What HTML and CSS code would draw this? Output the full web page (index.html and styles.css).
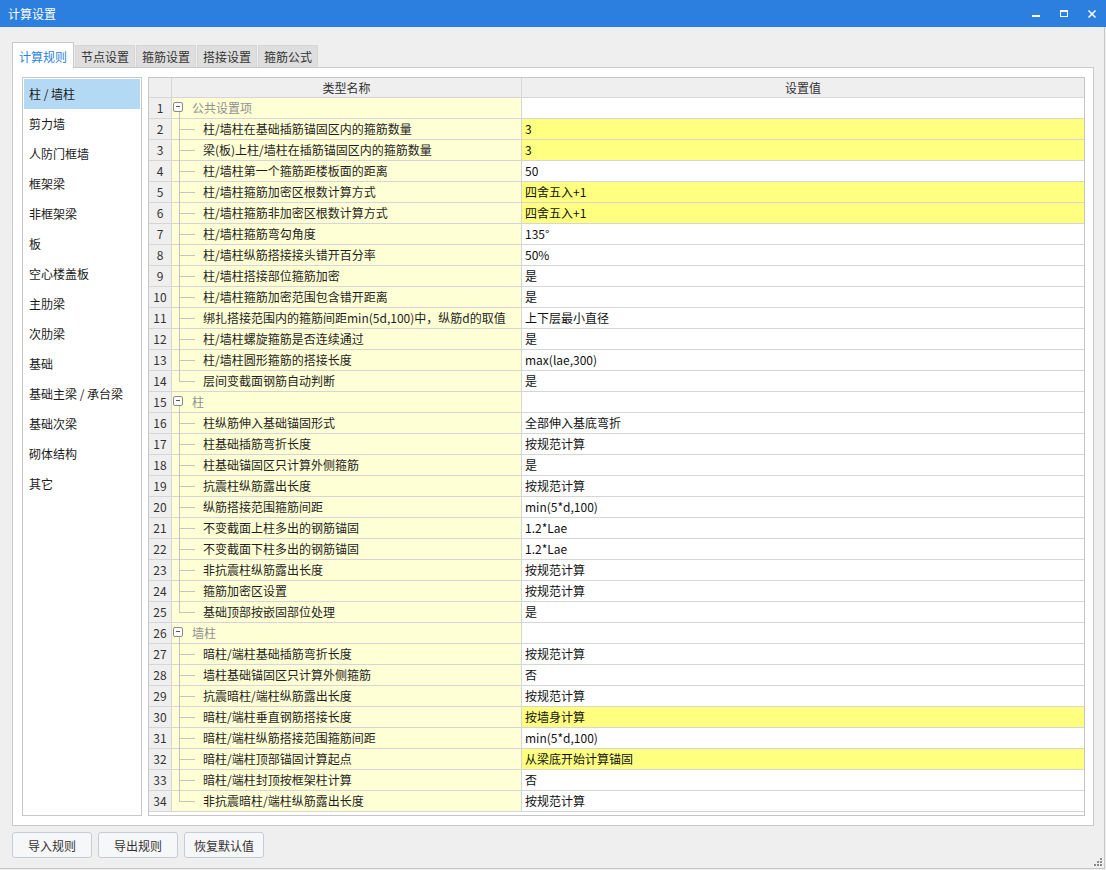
FILE: index.html
```html
<!DOCTYPE html>
<html lang="zh-CN">
<head>
<meta charset="utf-8">
<title>计算设置</title>
<link rel="stylesheet" href="styles.css">
</head>
<body>
<div class="window">
  <div class="titlebar">
    <span class="title">计算设置</span>
    <div class="controls">
      <span class="ctl"><svg width="28" height="27" viewBox="0 0 28 27"><rect x="10" y="15" width="8" height="2" fill="#fff"/></svg></span>
      <span class="ctl"><svg width="28" height="27" viewBox="0 0 28 27"><rect x="10" y="10" width="8" height="2" fill="#fff"/><rect x="10.5" y="10.5" width="7" height="6" fill="none" stroke="#fff" stroke-width="1"/></svg></span>
      <span class="ctl"><svg width="28" height="27" viewBox="0 0 28 27"><path d="M10.5 10.5 L17.5 17.5 M17.5 10.5 L10.5 17.5" stroke="#fff" stroke-width="1.5" fill="none"/></svg></span>
    </div>
  </div>
  <div class="client">
    <div class="tabs">
      <div class="tab active">计算规则</div>
      <div class="tab">节点设置</div>
      <div class="tab">箍筋设置</div>
      <div class="tab">搭接设置</div>
      <div class="tab">箍筋公式</div>
    </div>
    <div class="panel">
      <div class="list">
        <div class="item selected">柱 / 墙柱</div>
        <div class="item">剪力墙</div>
        <div class="item">人防门框墙</div>
        <div class="item">框架梁</div>
        <div class="item">非框架梁</div>
        <div class="item">板</div>
        <div class="item">空心楼盖板</div>
        <div class="item">主肋梁</div>
        <div class="item">次肋梁</div>
        <div class="item">基础</div>
        <div class="item">基础主梁 / 承台梁</div>
        <div class="item">基础次梁</div>
        <div class="item">砌体结构</div>
        <div class="item">其它</div>
      </div>
      <div class="grid">
        <div class="row head">
          <div class="num"></div>
          <div class="hname">类型名称</div>
          <div class="hval">设置值</div>
        </div>
        <div class="row"><div class="num">1</div><div class="name group"><span class="box"></span>公共设置项</div><div class="val"></div></div>
        <div class="row"><div class="num">2</div><div class="name child">柱/墙柱在基础插筋锚固区内的箍筋数量</div><div class="val hl">3</div></div>
        <div class="row"><div class="num">3</div><div class="name child">梁(板)上柱/墙柱在插筋锚固区内的箍筋数量</div><div class="val hl">3</div></div>
        <div class="row"><div class="num">4</div><div class="name child">柱/墙柱第一个箍筋距楼板面的距离</div><div class="val">50</div></div>
        <div class="row"><div class="num">5</div><div class="name child">柱/墙柱箍筋加密区根数计算方式</div><div class="val hl">四舍五入+1</div></div>
        <div class="row"><div class="num">6</div><div class="name child">柱/墙柱箍筋非加密区根数计算方式</div><div class="val hl">四舍五入+1</div></div>
        <div class="row"><div class="num">7</div><div class="name child">柱/墙柱箍筋弯勾角度</div><div class="val">135°</div></div>
        <div class="row"><div class="num">8</div><div class="name child">柱/墙柱纵筋搭接接头错开百分率</div><div class="val">50%</div></div>
        <div class="row"><div class="num">9</div><div class="name child">柱/墙柱搭接部位箍筋加密</div><div class="val">是</div></div>
        <div class="row"><div class="num">10</div><div class="name child">柱/墙柱箍筋加密范围包含错开距离</div><div class="val">是</div></div>
        <div class="row"><div class="num">11</div><div class="name child">绑扎搭接范围内的箍筋间距min(5d,100)中，纵筋d的取值</div><div class="val">上下层最小直径</div></div>
        <div class="row"><div class="num">12</div><div class="name child">柱/墙柱螺旋箍筋是否连续通过</div><div class="val">是</div></div>
        <div class="row"><div class="num">13</div><div class="name child">柱/墙柱圆形箍筋的搭接长度</div><div class="val">max(lae,300)</div></div>
        <div class="row"><div class="num">14</div><div class="name child last">层间变截面钢筋自动判断</div><div class="val">是</div></div>
        <div class="row"><div class="num">15</div><div class="name group"><span class="box"></span>柱</div><div class="val"></div></div>
        <div class="row"><div class="num">16</div><div class="name child">柱纵筋伸入基础锚固形式</div><div class="val">全部伸入基底弯折</div></div>
        <div class="row"><div class="num">17</div><div class="name child">柱基础插筋弯折长度</div><div class="val">按规范计算</div></div>
        <div class="row"><div class="num">18</div><div class="name child">柱基础锚固区只计算外侧箍筋</div><div class="val">是</div></div>
        <div class="row"><div class="num">19</div><div class="name child">抗震柱纵筋露出长度</div><div class="val">按规范计算</div></div>
        <div class="row"><div class="num">20</div><div class="name child">纵筋搭接范围箍筋间距</div><div class="val">min(5*d,100)</div></div>
        <div class="row"><div class="num">21</div><div class="name child">不变截面上柱多出的钢筋锚固</div><div class="val">1.2*Lae</div></div>
        <div class="row"><div class="num">22</div><div class="name child">不变截面下柱多出的钢筋锚固</div><div class="val">1.2*Lae</div></div>
        <div class="row"><div class="num">23</div><div class="name child">非抗震柱纵筋露出长度</div><div class="val">按规范计算</div></div>
        <div class="row"><div class="num">24</div><div class="name child">箍筋加密区设置</div><div class="val">按规范计算</div></div>
        <div class="row"><div class="num">25</div><div class="name child last">基础顶部按嵌固部位处理</div><div class="val">是</div></div>
        <div class="row"><div class="num">26</div><div class="name group"><span class="box"></span>墙柱</div><div class="val"></div></div>
        <div class="row"><div class="num">27</div><div class="name child">暗柱/端柱基础插筋弯折长度</div><div class="val">按规范计算</div></div>
        <div class="row"><div class="num">28</div><div class="name child">墙柱基础锚固区只计算外侧箍筋</div><div class="val">否</div></div>
        <div class="row"><div class="num">29</div><div class="name child">抗震暗柱/端柱纵筋露出长度</div><div class="val">按规范计算</div></div>
        <div class="row"><div class="num">30</div><div class="name child">暗柱/端柱垂直钢筋搭接长度</div><div class="val hl">按墙身计算</div></div>
        <div class="row"><div class="num">31</div><div class="name child">暗柱/端柱纵筋搭接范围箍筋间距</div><div class="val">min(5*d,100)</div></div>
        <div class="row"><div class="num">32</div><div class="name child">暗柱/端柱顶部锚固计算起点</div><div class="val hl">从梁底开始计算锚固</div></div>
        <div class="row"><div class="num">33</div><div class="name child">暗柱/端柱封顶按框架柱计算</div><div class="val">否</div></div>
        <div class="row"><div class="num">34</div><div class="name child last">非抗震暗柱/端柱纵筋露出长度</div><div class="val">按规范计算</div></div>
      </div>
    </div>
    <div class="buttons">
      <button class="btn">导入规则</button>
      <button class="btn">导出规则</button>
      <button class="btn">恢复默认值</button>
    </div>
    <svg class="grip" width="8" height="8" viewBox="0 0 8 8">
      <rect x="6" y="0" width="2" height="2" fill="#8a8a8a"/>
      <rect x="3" y="3" width="2" height="2" fill="#8a8a8a"/>
      <rect x="6" y="3" width="2" height="2" fill="#8a8a8a"/>
      <rect x="0" y="6" width="2" height="2" fill="#8a8a8a"/>
      <rect x="3" y="6" width="2" height="2" fill="#8a8a8a"/>
      <rect x="6" y="6" width="2" height="2" fill="#8a8a8a"/>
    </svg>
  </div>
</div>
</body>
</html>
```

FILE: styles.css
```css
* { box-sizing: border-box; }
html, body { margin: 0; padding: 0; }
body {
  width: 1106px;
  height: 870px;
  overflow: hidden;
  background: #efefef;
  font-family: "Noto Sans CJK SC", "Microsoft YaHei", sans-serif;
  font-size: 12px;
  color: #1e1e1e;
}
.window {
  width: 1106px;
  height: 870px;
  display: flex;
  flex-direction: column;
}
.titlebar {
  height: 27px;
  flex: none;
  background: #2c7fde;
  color: #fff;
  display: flex;
  align-items: center;
  padding-left: 8px;
}
.title { font-size: 12px; line-height: 27px; }
.controls { margin-left: auto; display: flex; height: 27px; }
.ctl { width: 28px; height: 27px; display: block; }
.ctl svg { display: block; }
.client {
  flex: 1;
  position: relative;
  border-right: 1px solid #c6c6c6;
  border-bottom: 1px solid #c6c6c6;
  margin-right: 1px;
  margin-bottom: 1px;
}
.tabs {
  display: flex;
  align-items: flex-end;
  gap: 1px;
  margin: 15px 0 0 12px;
  height: 25px;
}
.tab {
  width: 60px;
  height: 22px;
  line-height: 21px;
  text-align: center;
  background: #dedede;
  border: 1px solid #d6d6d6;
  border-bottom: none;
  color: #333;
}
.tab.active {
  width: 62px;
  height: 26px;
  line-height: 27px;
  background: #fff;
  border-color: #c8c8c8;
  color: #2b7fdf;
  margin-bottom: -1px;
  position: relative;
  z-index: 2;
}
.panel {
  margin-left: 12px;
  width: 1082px;
  height: 759px;
  border: 1px solid #c9c9c9;
  background: #fff;
  padding: 9px 8px 9px 9px;
  display: flex;
  gap: 6px;
}
.list {
  width: 120px;
  flex: none;
  border: 1px solid #c8c8c8;
  padding: 1px;
}
.item {
  height: 30px;
  line-height: 30px;
  padding-left: 5px;
  color: #1a1a1a;
}
.item.selected { background: #b4d9f5; }
.grid {
  flex: 1;
  border: 1px solid #c6c6c6;
  background: #fff;
}
.row {
  display: grid;
  grid-template-columns: 23px 350px 1fr;
  height: 21px;
}
.row.head { height: 20px; background: #efefef; }
.row > div { border-bottom: 1px solid #d6d6d6; }
.head > div {
  text-align: center;
  line-height: 19px;
  color: #333;
  border-right: 1px solid #d6d6d6;
}
.head > .hval { border-right: none; }
.num {
  background: #efefef;
  border-right: 1px solid #d6d6d6;
  text-align: center;
  line-height: 20px;
  color: #333;
}
.name {
  background: #ffffd5;
  border-right: 1px solid #d6d6d6;
  line-height: 20px;
  position: relative;
  white-space: nowrap;
}
.name.group { padding-left: 20px; color: #919191; }
.name.child { padding-left: 31px; }
.box {
  position: absolute;
  left: 1px;
  top: 4px;
  width: 10px;
  height: 10px;
  border: 1px solid #8a8a8a;
  border-radius: 2px;
  background: #fff;
}
.box::after {
  content: "";
  position: absolute;
  left: 2px;
  top: 3px;
  width: 4px;
  height: 1px;
  background: #555;
}
.name.group::after {
  content: "";
  position: absolute;
  left: 7px;
  top: 14px;
  bottom: -1px;
  width: 1px;
  background: #c4c4c4;
}
.name.child::before {
  content: "";
  position: absolute;
  left: 7px;
  top: 0;
  bottom: -1px;
  width: 1px;
  background: #c4c4c4;
}
.name.child.last::before { bottom: 10px; }
.name.child::after {
  content: "";
  position: absolute;
  left: 7px;
  top: 10px;
  width: 16px;
  height: 1px;
  background: #c4c4c4;
}
.val {
  padding-left: 3px;
  line-height: 20px;
  background: #fff;
  color: #111;
}
.val.hl { background: #ffff80; }
.buttons {
  display: flex;
  gap: 6px;
  margin: 6px 0 0 12px;
}
.btn {
  width: 80px;
  height: 26px;
  border: 1px solid #c5cbd7;
  border-radius: 3px;
  background: #f6f7f9;
  font-family: "Noto Sans CJK SC", "Microsoft YaHei", sans-serif;
  font-size: 12px;
  color: #333;
  padding: 0;
}
.grip {
  position: absolute;
  right: 2px;
  bottom: 2px;
  display: block;
}
```
